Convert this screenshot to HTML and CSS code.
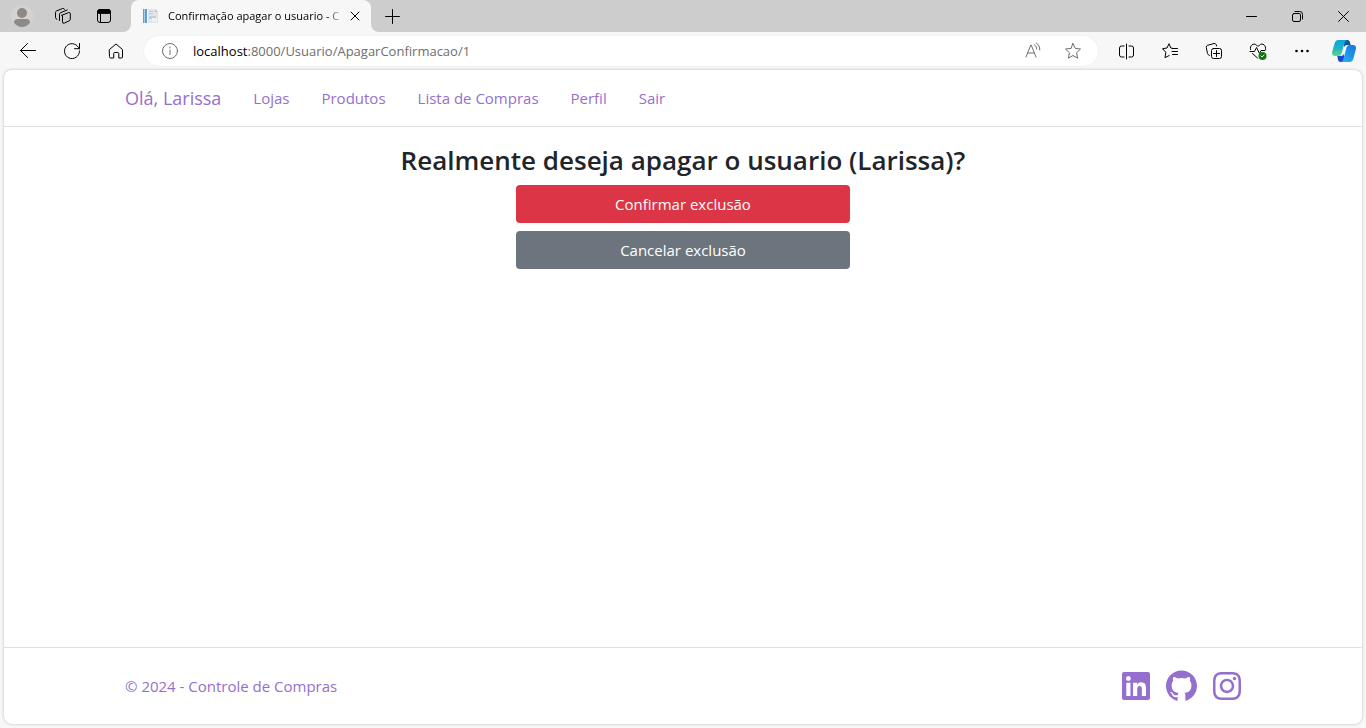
FILE: index.html
```html
<!DOCTYPE html>
<html lang="pt-BR">
<head>
<meta charset="utf-8">
<meta name="viewport" content="width=device-width, initial-scale=1">
<title>Confirmação apagar o usuario - Controle de Compras</title>
<link rel="stylesheet" href="styles.css">
</head>
<body>
<div class="browser">
  <div class="tabbar">
    <div class="edge">
      <div class="edge-fill edge-left">
        <button class="tab-tool" aria-label="Perfil do navegador">
          <svg width="22" height="22" viewBox="0 0 22 22"><circle cx="11" cy="11" r="11" fill="#d6d3ce"/><circle cx="11" cy="8" r="5" fill="#8d8986"/><path d="M3 17.500c0-2.500 1.500-3.500 3.500-3.500h9c2 0 3.500 1 3.500 3.500A10 10 0 0 1 11 22a10 10 0 0 1-8-4.500z" fill="#8d8986"/></svg>
        </button>
        <button class="tab-tool" aria-label="Espaços de trabalho">
          <svg class="line" width="18" height="18" viewBox="0 0 18 18"><path d="M8 8.200 14.600 5.600q1.700-.6 1.700 1.200v5.400q0 1.200-1.200 1.700l-4.700 2.200q-1.900.8-1.900-1.200V8.700q0-.3-.5-.5zM5.500 13.500V7.200q0-1 1-1.500L13.300 3M2.900 12.300q-1.400-.5-1.400-1.700V5.400q0-1 1-1.500L8.700 1.500q1.500-.5 1.800.8"/></svg>
        </button>
        <button class="tab-tool" aria-label="Menu de ações da guia">
          <svg class="line" width="16" height="16" viewBox="0 0 16 16"><rect x="1.500" y="1.500" width="13" height="13" rx="2.500"/><path d="M1.500 5V4q0-2.500 2.500-2.500h8q2.500 0 2.500 2.500v1z" fill="#000"/><path d="M4.500 5v9.500"/></svg>
        </button>
      </div>
    </div>
    <div class="tab-slot">
      <div class="tab">
        <svg width="16" height="16" viewBox="0 0 16 16"><path d="M0 1h4v14H0z" fill="#5b9fd4"/><path d="M1 1h1v14H1z" fill="#a9cdea"/><path d="M5 1h7l3 3v11H5z" fill="#dfe5ea"/><path d="M12 1v3h3z" fill="#b5c3d0"/><path d="M6 3h4v1H6zM6 5h4v1H6z" fill="#c0cad4"/><path d="M6 8h7v3H6z" fill="#c3ced9"/><path d="M9 10h5v4H9z" fill="#eef1f4"/></svg>
        <span class="tab-title">Confirmação apagar o usuario - C</span>
        <button class="tab-close" aria-label="Fechar guia"><svg class="line" width="10" height="10" viewBox="0 0 10 10"><path d="m1 1 8 8M9 1 1 9"/></svg></button>
      </div>
    </div>
    <div class="edge edge-grow">
      <div class="edge-fill edge-right">
        <button class="new-tab" aria-label="Nova guia"><svg class="line" width="15" height="15" viewBox="0 0 15 15"><path d="M7.500.5v14M.5 7.500h14"/></svg></button>
        <div class="window-controls">
          <button aria-label="Minimizar"><svg class="line" width="11" height="11" viewBox="0 0 11 11"><path d="M.5 5.500h10"/></svg></button>
          <button aria-label="Restaurar"><svg class="line" width="11" height="11" viewBox="0 0 11 11"><rect x=".5" y="2.500" width="8" height="8" rx="1.500"/><path d="M3 .5h4.700q2.800 0 2.800 2.800V8"/></svg></button>
          <button aria-label="Fechar"><svg class="line" width="11" height="11" viewBox="0 0 11 11"><path d="m.5.5 10 10M10.500.5l-10 10"/></svg></button>
        </div>
      </div>
    </div>
  </div>

  <div class="toolbar">
    <div class="tools">
      <button aria-label="Voltar"><svg class="line" width="18" height="18" viewBox="0 0 18 18"><path d="M16.500 8.500H1.500M8.500 1.500l-7 7 7 7"/></svg></button>
      <button aria-label="Atualizar"><svg class="line" width="18" height="18" viewBox="0 0 18 18"><path d="M16.200 7A7.500 7.500 0 1 0 16.500 9M16.500 1.500v5.200h-5"/></svg></button>
      <button aria-label="Início"><svg class="line" width="18" height="18" viewBox="0 0 18 18"><path d="M2.500 7.500 9 2l6.500 5.500V15q0 1-1 1h-2.700V11.500q0-1-1-1H7.700q-1 0-1 1V16H3.500q-1 0-1-1z"/></svg></button>
    </div>
    <div class="address">
      <svg class="muted" width="18" height="18" viewBox="0 0 18 18"><circle cx="9" cy="9" r="7.500"/><path d="M9 8v4.500M9 5v1"/></svg>
      <div class="url" role="textbox" aria-label="Endereço"><span class="host">localhost</span>:8000/Usuario/ApagarConfirmacao/1</div>
      <button aria-label="Ler em voz alta"><svg class="muted" width="18" height="18" viewBox="0 0 18 18"><path d="M2 15 6.800 3h.4L12 15M3.800 11h6.400M10.200 2.500q2.700 1.500 2.600 4.500M12.300 1q3.600 2.200 3.500 7"/></svg></button>
      <button aria-label="Adicionar aos favoritos"><svg class="muted" width="18" height="18" viewBox="0 0 18 18"><path d="m9 1.500 2.200 4.900 5.300.6-3.900 3.700 1 5.500L9 13.500l-4.600 2.700 1-5.500L1.500 7l5.300-.6z"/></svg></button>
    </div>
    <div class="tools">
      <button aria-label="Tela dividida"><svg class="line" width="17" height="17" viewBox="0 0 17 17"><path d="M6 3H3.500q-2 0-2 2v7q0 2 2 2H6M11 3h2.500q2 0 2 2v7q0 2-2 2H11M8.500 1v15"/></svg></button>
      <button aria-label="Favoritos"><svg class="line" width="18" height="18" viewBox="0 0 18 18"><path d="M13 6.500h-1L9.800 6 8 1.700 6 6l-4.500.7 3.300 3.500-.8 5.500 4.200-2.200M11.500 6.500h5M11 9.500h5.500M11.500 12.500h5"/></svg></button>
      <button aria-label="Coleções"><svg class="line" width="18" height="18" viewBox="0 0 18 18"><rect x="6.500" y="6.500" width="10" height="10" rx="2"/><path d="M11.500 8.500v6M8.500 11.500h6M4.500 13.500q-1.500-.5-2-2L1.300 5.500q-.3-1.700 1.300-2.200L9 1.500q1.600-.3 2.100 1l.5 1.500"/></svg></button>
      <button aria-label="Integridade do navegador"><svg class="line" width="18" height="18" viewBox="0 0 18 18"><path d="M1.500 7.500C.5 3.500 4.500.5 7.500 3L9 4.500 10.500 3c3-2.500 7 .5 6 4.500M1 9.500h4.500l2-4 3 6 1.500-3h4M3.500 11.500l5 4.500"/><circle cx="13.500" cy="14" r="4" fill="#107c10" stroke="none"/><path d="m12 14 1 1 2-2" stroke="#fff"/></svg></button>
      <button aria-label="Configurações e mais"><svg width="18" height="18" viewBox="0 0 18 18"><circle cx="3.500" cy="9" r="1.300"/><circle cx="9" cy="9" r="1.300"/><circle cx="14.500" cy="9" r="1.300"/></svg></button>
      <button class="copilot" aria-label="Copilot">
        <svg width="24" height="22" viewBox="0 0 24 22">
          <defs>
            <linearGradient id="ga" x1="0" y1="0" x2="0" y2="1"><stop offset="0" stop-color="#0aa5e0"/><stop offset=".5" stop-color="#1fb3c3"/><stop offset="1" stop-color="#5fd68c"/></linearGradient>
            <linearGradient id="gb" x1="0" y1="1" x2="1" y2="0"><stop offset="0" stop-color="#2ab5fb"/><stop offset="1" stop-color="#1573d8"/></linearGradient>
          </defs>
          <path d="M11 0h4.500q1.800 0 2.300 1.800L18.700 5H15q-2 0-2.600 2z" fill="#0b5a94"/>
          <path d="M13 22H8.500q-1.800 0-2.300-1.800L5.300 16H9q2 0 2.600-2z" fill="#1b44d1"/>
          <path d="M6 0h9.500q-2 0-2.700 2.200L9.500 13.500Q8.800 16 6.500 16H3q-3.700 0-2.800-4.500L2.800 2.700Q3.600 0 6 0z" fill="url(#ga)"/>
          <path d="M18 22H8.500q2 0 2.700-2.200l3.300-12.300Q15.200 5 17.500 5H21q3.700 0 2.800 4.500l-2.600 9.800Q20.400 22 18 22z" fill="url(#gb)"/>
        </svg>
      </button>
    </div>
  </div>

  <div class="page">
    <header class="site-header">
      <nav class="container nav">
        <a class="brand" href="#">Olá, Larissa</a>
        <a href="#">Lojas</a>
        <a href="#">Produtos</a>
        <a href="#">Lista de Compras</a>
        <a href="#">Perfil</a>
        <a href="#">Sair</a>
      </nav>
    </header>
    <main class="container main">
      <h1>Realmente deseja apagar o usuario (Larissa)?</h1>
      <div class="actions">
        <button class="btn btn-danger">Confirmar exclusão</button>
        <button class="btn btn-secondary">Cancelar exclusão</button>
      </div>
    </main>
    <footer class="site-footer">
      <div class="container footer-row">
        <span>© 2024 - Controle de Compras</span>
        <div class="social">
          <a href="#" aria-label="LinkedIn"><svg width="28" height="32" viewBox="0 0 448 512"><path d="M416 32H31.900C14.300 32 0 46.500 0 64.300v383.400C0 465.500 14.300 480 31.900 480H416c17.600 0 32-14.500 32-32.300V64.300c0-17.800-14.400-32.300-32-32.300zM135.400 416H69V202.200h66.500V416zm-33.200-243c-21.300 0-38.500-17.300-38.500-38.500S80.900 96 102.200 96c21.200 0 38.500 17.300 38.500 38.500 0 21.300-17.200 38.500-38.500 38.500zm282.100 243h-66.400V312c0-24.800-.5-56.700-34.500-56.700-34.600 0-39.900 27-39.900 54.900V416h-66.400V202.200h63.700v29.200h.9c8.900-16.800 30.600-34.500 62.900-34.500 67.200 0 79.700 44.300 79.700 101.900V416z"/></svg></a>
          <a href="#" aria-label="GitHub"><svg width="31" height="32" viewBox="0 0 16 16"><path d="M8 0C3.580 0 0 3.580 0 8c0 3.540 2.290 6.530 5.470 7.590.4.070.55-.17.55-.38 0-.19-.01-.82-.01-1.490-2.010.37-2.530-.49-2.690-.94-.09-.23-.48-.94-.82-1.130-.28-.15-.68-.52-.01-.53.63-.01 1.080.58 1.230.82.72 1.210 1.870.87 2.330.66.070-.52.28-.87.51-1.070-1.780-.2-3.640-.89-3.640-3.950 0-.87.31-1.590.82-2.150-.08-.2-.36-1.020.08-2.120 0 0 .67-.21 2.200.82.64-.18 1.320-.27 2-.27s1.360.09 2 .27c1.530-1.040 2.200-.82 2.200-.82.44 1.100.16 1.920.08 2.120.51.56.82 1.270.82 2.150 0 3.070-1.870 3.750-3.650 3.950.29.25.54.73.54 1.480 0 1.070-.01 1.930-.01 2.200 0 .21.15.46.55.38A8.010 8.010 0 0 0 16 8c0-4.420-3.580-8-8-8"/></svg></a>
          <a href="#" aria-label="Instagram"><svg width="28" height="32" viewBox="0 0 448 512"><path d="M224.100 141c-63.600 0-114.900 51.300-114.900 114.900s51.300 114.900 114.900 114.900S339 319.500 339 255.900 287.700 141 224.100 141zm0 189.600c-41.100 0-74.700-33.500-74.700-74.700s33.500-74.700 74.700-74.700 74.700 33.500 74.700 74.700-33.600 74.700-74.700 74.700zm146.400-194.300c0 14.900-12 26.800-26.800 26.800-14.900 0-26.800-12-26.800-26.800s12-26.800 26.800-26.800 26.800 12 26.800 26.800zm76.100 27.200c-1.700-35.900-9.900-67.700-36.200-93.900-26.200-26.200-58-34.400-93.900-36.200-37-2.100-147.900-2.100-184.900 0-35.800 1.700-67.600 9.900-93.900 36.100s-34.400 58-36.200 93.900c-2.100 37-2.100 147.900 0 184.900 1.700 35.900 9.900 67.700 36.200 93.900s58 34.400 93.900 36.200c37 2.100 147.900 2.100 184.900 0 35.900-1.700 67.700-9.900 93.900-36.200 26.200-26.200 34.400-58 36.200-93.900 2.100-37 2.100-147.800 0-184.800zM398.800 388c-7.800 19.600-22.900 34.700-42.600 42.600-29.500 11.700-99.500 9-132.100 9s-102.700 2.600-132.100-9c-19.600-7.800-34.700-22.900-42.600-42.600-11.700-29.500-9-99.500-9-132.100s-2.600-102.700 9-132.100c7.800-19.600 22.900-34.700 42.600-42.600 29.500-11.700 99.500-9 132.100-9s102.700-2.600 132.100 9c19.600 7.800 34.700 22.900 42.600 42.600 11.700 29.500 9 99.500 9 132.100s2.700 102.700-9 132.100z"/></svg></a>
        </div>
      </div>
    </footer>
  </div>
</div>
</body>
</html>
```
FILE: styles.css
```css
:root {
  --purple: #956fce;
  --chrome: #f7f7f7;
  --strip: #cdcdcd;
}

* { box-sizing: border-box; }

body {
  margin: 0;
  background: var(--chrome);
  font-family: "Open Sans", "Noto Sans", sans-serif;
  font-size: 15px;
  line-height: 24px;
  color: #212529;
}

button {
  margin: 0;
  padding: 0;
  border: 0;
  background: none;
  font: inherit;
  color: inherit;
}

svg { display: block; flex: none; }

.line, .muted {
  fill: none;
  stroke: #000;
  stroke-linecap: round;
  stroke-linejoin: round;
}

.muted { stroke: #6e6e6e; }

.browser {
  display: flex;
  flex-direction: column;
  min-height: 100vh;
}

/* Tab strip */
.tabbar { display: flex; height: 32px; }

.edge { display: flex; }
.edge-grow { flex: 1; }

.edge-fill {
  display: flex;
  align-items: center;
  flex: 1;
  background: var(--strip);
}

.edge-left {
  padding: 0 7px 0 1px;
  border-radius: 0 0 8px 0;
}

.edge-right {
  justify-content: space-between;
  border-radius: 0 0 0 8px;
}

.tab-tool {
  display: grid;
  place-items: center;
  width: 41px;
  height: 32px;
}

.tab-slot { background: var(--strip); }

.tab {
  display: flex;
  align-items: center;
  width: 240px;
  height: 32px;
  padding: 0 6px 0 12px;
  border-radius: 8px 8px 0 0;
  background: var(--chrome);
}

.tab-title {
  flex: 1;
  margin-left: 9px;
  white-space: nowrap;
  font-size: 11px;
  color: #000;
  mask-image: linear-gradient(to right, #000 90%, transparent);
}

.tab-close {
  display: grid;
  place-items: center;
  width: 20px;
  height: 20px;
  margin-left: 1px;
}

.new-tab {
  display: grid;
  place-items: center;
  width: 43px;
  height: 32px;
}

.window-controls { display: flex; }

.window-controls button {
  display: grid;
  place-items: center;
  width: 46px;
  height: 32px;
}

/* Toolbar */
.toolbar {
  display: flex;
  align-items: center;
  gap: 6px;
  height: 38px;
  padding: 0 2px 0 6px;
}

.tools { display: flex; }

.tools button {
  display: grid;
  place-items: center;
  width: 44px;
  height: 30px;
}

.tools .copilot { width: 40px; }

.address {
  display: flex;
  align-items: center;
  flex: 1;
  min-width: 0;
  height: 30px;
  padding: 0 5px 0 17px;
  border-radius: 15px;
  background: #fff;
  box-shadow: 0 0 2px rgba(0, 0, 0, .08);
}

.address button {
  display: grid;
  place-items: center;
  width: 40px;
  height: 30px;
}

.url {
  flex: 1;
  margin-left: 14px;
  overflow: hidden;
  white-space: nowrap;
  font-size: 13px;
  color: #6e6e6e;
}

.host { color: #000; }

/* Site */
.page {
  display: flex;
  flex-direction: column;
  flex: 1;
  margin: 0 4px 4px;
  border-radius: 8px;
  background: #fff;
  box-shadow: 0 0 3px rgba(0, 0, 0, .25);
}

.container {
  width: 100%;
  max-width: 1140px;
  margin: 0 auto;
  padding: 0 12px;
}

.site-header {
  padding: 8px 0;
  border-bottom: 1px solid #dee2e6;
  color: var(--purple);
}

.nav {
  display: flex;
  align-items: center;
  gap: 32px;
  min-height: 40px;
}

.nav a { color: inherit; text-decoration: none; }

.nav .brand { font-size: 18px; }

.main {
  flex: 1;
  padding-top: 16px;
  text-align: center;
}

h1 {
  margin: 0 0 8px;
  font-size: 26px;
  font-weight: 600;
  line-height: 34px;
}

.actions {
  display: grid;
  gap: 8px;
  width: 30%;
  min-width: 240px;
  margin: 0 auto;
}

.btn {
  height: 38px;
  border-radius: 4px;
  color: #fff;
}

.btn-danger { background: #dc3545; }
.btn-secondary { background: #6c757d; }

.site-footer {
  padding: 22px 0;
  border-top: 1px solid #dee2e6;
  color: var(--purple);
}

.footer-row {
  display: flex;
  align-items: center;
  justify-content: space-between;
}

.social { display: flex; gap: 16px; }
.social a { color: inherit; }
.social svg { fill: currentColor; }
```
